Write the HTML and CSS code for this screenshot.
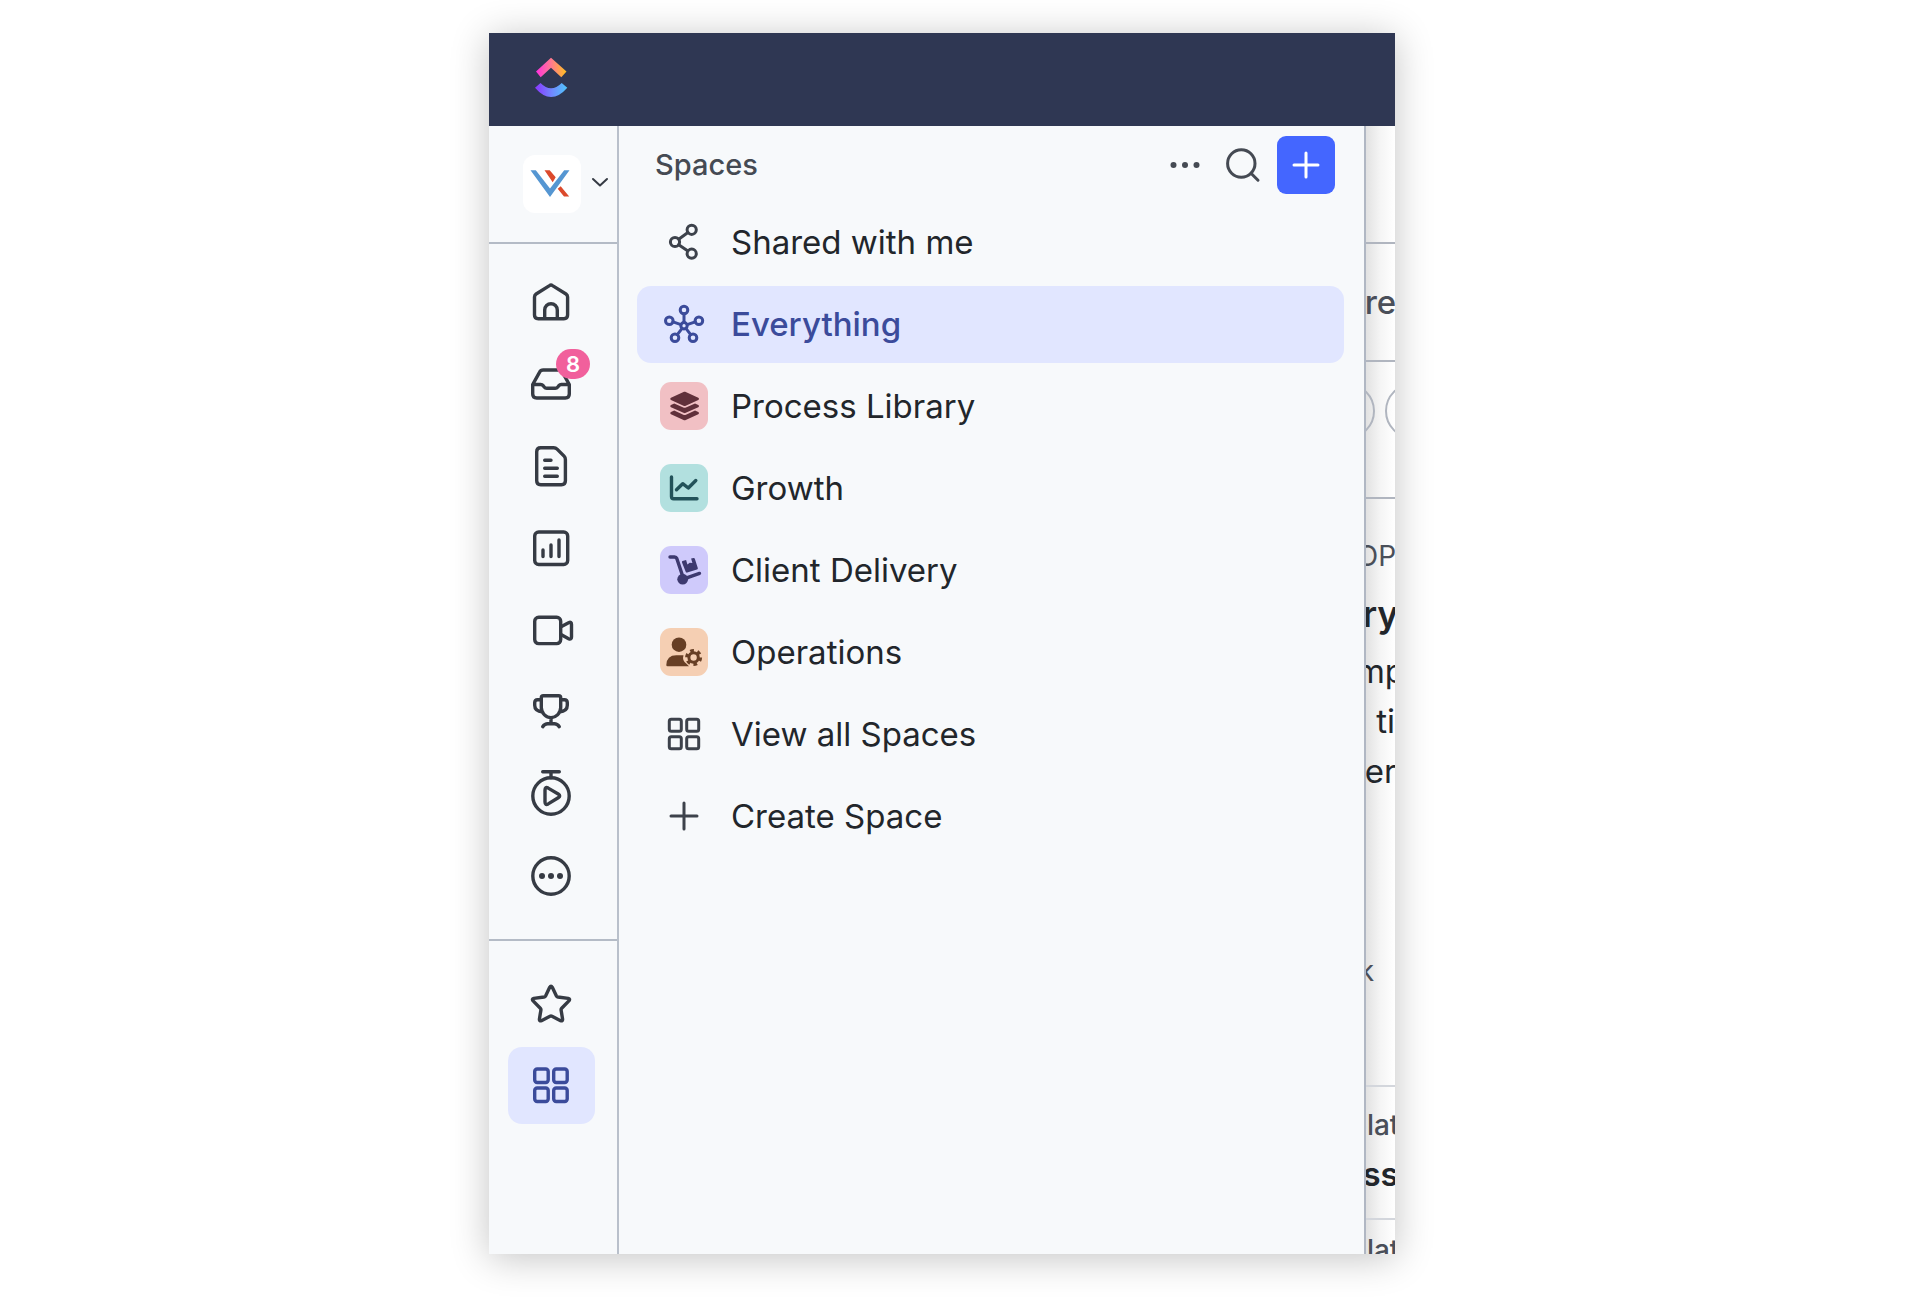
FILE: index.html
```html
<!DOCTYPE html>
<html lang="en">
<head>
<meta charset="utf-8">
<meta name="viewport" content="width=device-width, initial-scale=1">
<title>Spaces</title>
<link rel="stylesheet" href="styles.css">
</head>
<body>
<div class="app">
  <header class="topbar">
    <a class="brand" href="#" aria-label="Home page">
      <svg width="36" height="42" viewBox="0 0 36 42">
        <defs>
          <linearGradient id="warm" x1="0" y1="0" x2="1" y2="0"><stop offset="0" stop-color="#ff2fe0"/><stop offset=".5" stop-color="#ff7a8e"/><stop offset="1" stop-color="#ffc01f"/></linearGradient>
          <linearGradient id="cool" x1="0" y1="0" x2="1" y2="0"><stop offset="0" stop-color="#8a35ff"/><stop offset=".55" stop-color="#6f8cff"/><stop offset="1" stop-color="#4fc6fb"/></linearGradient>
        </defs>
        <path fill="url(#warm)" d="M3 15.500 18 1.700l15.500 13.800-5.200 5.700L18 11.700 7.700 21.200z"/>
        <path fill="url(#cool)" d="M2 31.700 7.500 27Q18 37.700 28.700 27l5.600 4.700Q18 50.300 2 31.700z"/>
      </svg>
    </a>
  </header>

  <nav class="rail" aria-label="Main">
    <button class="workspace" type="button" aria-label="Switch workspace">
      <span class="workspace-logo">
        <svg width="58" height="58" viewBox="0 0 58 58">
          <path fill="#dc4a2c" d="M21.500 15.300h5.200l6 7-3 5zM37.700 31.300l8.500 10.200H41l-6.300-7.800z"/>
          <path fill="#5596d2" d="M7.500 15.300h5.300L27 33.500l14.200-18.200h5.300L27 42z"/>
        </svg>
      </span>
      <svg class="line" width="22" height="22" viewBox="0 0 22 22"><path d="M4 6l7 6.500L18 6"/></svg>
    </button>

    <div class="rail-group rail-main">
      <button class="rail-item" type="button" aria-label="Home"><svg class="line" viewBox="0 0 48 48"><path d="M22.500 7.600q1.500-1 3 0L39 16q1.600 1.100 1.600 3V37q0 3.700-3.700 3.700H11.200q-3.700 0-3.700-3.700V19q0-1.900 1.600-3zM17.700 40.500V32a6.300 6.300 0 0 1 12.600 0v8.500"/></svg></button>
      <button class="rail-item" type="button" aria-label="Inbox, 8 new"><svg class="line" viewBox="0 0 48 48"><path d="M5.700 24.500 12.500 12.300Q13.700 10 16.200 10h15.600q2.500 0 3.700 2.300l6.800 12.200V34q0 4-4 4H9.700q-4 0-4-4zh8q1.500 0 2.500 1.200l1 1.300q1 1.300 2.500 1.300h8.600q1.500 0 2.500-1.300l1-1.300q1-1.200 2.500-1.200h8"/></svg><span class="badge">8</span></button>
      <button class="rail-item" type="button" aria-label="Docs"><svg class="line" viewBox="0 0 48 48"><path d="M13.700 5.700h13q2 0 3.400 1.400l7 7q1.300 1.300 1.300 3.300v21.300q0 4-4 4H13.700q-4 0-4-4v-29q0-4 4-4zM17.700 18.300H24M17.700 26.300h12.600M17.700 34.300h12.600"/></svg></button>
      <button class="rail-item" type="button" aria-label="Dashboards"><svg class="line" viewBox="0 0 48 48"><rect x="7.700" y="8" width="33" height="32.500" rx="4"/><path d="M16 26v6.500M24 21v11.500M32 16v16.500"/></svg></button>
      <button class="rail-item" type="button" aria-label="Clips"><svg class="line" viewBox="0 0 48 48"><rect x="7.700" y="11.300" width="26" height="26.300" rx="4"/><path d="M34 20.700l7.600-4q2.900-1.300 2.900 1.800v12.400q0 3.100-2.900 1.800L34 28.500"/></svg></button>
      <button class="rail-item" type="button" aria-label="Goals"><svg class="line" viewBox="0 0 48 48"><path d="M16.300 7.700h15.400q2 0 2 2V19.500C33.700 25.500 28.500 29.700 24 29.700S14.300 25.500 14.300 19.500V9.700q0-2 2-2zM14.300 11.700h-3.600q-3 0-3 3v2.600q0 6 8 6.700M33.700 11.700h3.600q3 0 3 3v2.600q0 6-8 6.700M24 29.700v6M15.700 38.700q2-3 5-3h6.600q3 0 5 3"/></svg></button>
      <button class="rail-item" type="button" aria-label="Timesheets"><svg class="line" viewBox="0 0 48 48"><circle cx="24" cy="26" r="18.200"/><path d="M15.700 1.700h16.600M24 1.700v6M18 20q0-3.600 3.200-1.900l10 5.900q3 1.900 0 3.800l-10 6.100Q18 35.600 18 32z"/></svg></button>
      <button class="rail-item" type="button" aria-label="More"><svg class="line" viewBox="0 0 48 48"><circle cx="24" cy="24" r="18.200"/><g class="dots"><circle cx="15" cy="24" r="3"/><circle cx="24" cy="24" r="3"/><circle cx="33" cy="24" r="3"/></g></svg></button>
    </div>

    <div class="rail-group rail-pinned">
      <button class="rail-item" type="button" aria-label="Favorites"><svg class="line" viewBox="0 0 48 48"><path d="M22.700 8.300q1.300-2.300 2.600 0l4 8.500q.5 1 1.600 1.200l10.300 1.400q2.300.6.700 2.500l-7.200 7.300q-.8.800-.6 1.900l1.500 9.100q.1 2.300-2 1.500l-8.600-4.400q-1-.5-2 0l-8.600 4.400q-2.100.8-2-1.500l1.500-9.100q.2-1.100-.6-1.900L6.100 21.900q-1.600-1.900.7-2.500L17.100 18q1.100-.2 1.600-1.200z"/></svg></button>
      <button class="rail-item is-active" type="button" aria-label="Spaces" aria-current="page"><svg class="line" viewBox="0 0 48 48"><rect x="7.700" y="8" width="13.500" height="13.500" rx="2.500"/><rect x="26.700" y="8" width="13.500" height="13.500" rx="2.500"/><rect x="7.700" y="27" width="13.500" height="13.500" rx="2.500"/><rect x="26.700" y="27" width="13.500" height="13.500" rx="2.500"/></svg></button>
    </div>
  </nav>

  <aside class="panel">
    <div class="panel-head">
      <h1 class="panel-title">Spaces</h1>
      <button class="tool" type="button" aria-label="Space options"><svg viewBox="0 0 48 48"><g class="dots"><circle cx="12.500" cy="24" r="3"/><circle cx="24" cy="24" r="3"/><circle cx="35.500" cy="24" r="3"/></g></svg></button>
      <button class="tool" type="button" aria-label="Search"><svg class="line thin" viewBox="0 0 48 48"><circle cx="22.300" cy="22.500" r="13.700"/><path d="M32 32.200l7 7"/></svg></button>
      <button class="add" type="button" aria-label="New"><svg class="line thin" viewBox="0 0 48 48"><path d="M24 12v24M12 24h24"/></svg></button>
    </div>
    <ul class="spaces">
      <li><a class="space" href="#"><span class="icon"><svg class="line thin" viewBox="0 0 48 48"><circle cx="31.700" cy="11.800" r="4.600"/><circle cx="15" cy="24" r="4.600"/><circle cx="31.700" cy="35.700" r="4.600"/><path d="M18.700 21.200l9.200-6.700M18.700 26.700l9.200 6.300"/></svg></span>Shared with me</a></li>
      <li><a class="space is-active" href="#" aria-current="page"><span class="icon"><svg class="line thin" viewBox="0 0 48 48"><circle cx="24" cy="25.700" r="3.200"/><circle cx="24" cy="10" r="3.800"/><circle cx="9.300" cy="20.700" r="3.800"/><circle cx="38.900" cy="20.700" r="3.800"/><circle cx="15" cy="37.700" r="3.800"/><circle cx="33" cy="37.700" r="3.800"/><path d="M24 13.800v8.700M13 21.900l8 2.700M35.200 21.900l-8 2.700M22.100 28.400l-4.800 6.200M25.900 28.400l4.800 6.200"/></svg></span>Everything</a></li>
      <li><a class="space" href="#"><span class="icon tile rose"><svg viewBox="0 0 48 48"><path transform="translate(10.300 9.700) scale(.056)" d="M12.410 148.020l232.940 105.670c6.800 3.090 14.490 3.090 21.290 0l232.940-105.670c16.550-7.510 16.550-32.520 0-40.030L266.650 2.310a25.607 25.607 0 0 0-21.290 0L12.410 107.980c-16.550 7.510-16.550 32.530 0 40.040zm487.180 88.280l-58.090-26.330-161.640 73.270c-7.560 3.430-15.590 5.170-23.860 5.170s-16.290-1.740-23.860-5.170L70.510 209.970l-58.100 26.330c-16.550 7.500-16.550 32.500 0 40l232.940 105.590c6.800 3.080 14.490 3.080 21.290 0L499.590 276.300c16.550-7.500 16.550-32.500 0-40zm0 127.800l-57.870-26.230-161.860 73.370c-7.560 3.430-15.590 5.170-23.860 5.170s-16.290-1.740-23.860-5.170L70.290 337.870 12.410 364.100c-16.550 7.500-16.550 32.500 0 40l232.940 105.590c6.800 3.080 14.490 3.080 21.290 0L499.590 404.100c16.550-7.500 16.550-32.500 0-40z"/></svg></span>Process Library</a></li>
      <li><a class="space" href="#"><span class="icon tile teal"><svg class="line" viewBox="0 0 48 48"><path d="M11.500 13v19.500q0 2.200 2.200 2.200H37M16.500 25.800l6.200-6.100 5.600 4.300 7.500-7.500"/></svg></span>Growth</a></li>
      <li><a class="space" href="#"><span class="icon tile violet"><svg viewBox="0 0 48 48"><path d="M22.500 15l3.600-1 1.300 4.500 2.300-1.700 2.700.3-1.300-4.500 2.400-.6q1.100-.2 1.400.9L37.800 22q.3 1.200-.8 1.500l-9.800 3q-1.200.3-1.500-.8l-3.700-9.200q-.3-1.200.5-1.500z"/><circle cx="22.700" cy="33.200" r="5.400"/><path class="stroke" d="M10 11h4.600q1.600 0 2.200 1.500l5.500 16.500M26 32.200l13.500-4.800"/></svg></span>Client Delivery</a></li>
      <li><a class="space" href="#"><span class="icon tile peach"><svg viewBox="0 0 48 48"><circle cx="19" cy="16.700" r="7.300"/><path d="M6.300 37q.4-9.700 10-9.700h7.200q-1.700 5.400 3 8.500l2.500 2.500H7.500q-1.200 0-1.200-1.300z"/><path class="stroke" stroke-dasharray="3.400 3.400" d="M40.100 29.500a6.500 6.500 0 1 1-1.900-4.600 6.500 6.500 0 0 1 1.900 4.600"/><circle class="ring" cx="33.600" cy="29.500" r="4.700"/></svg></span>Operations</a></li>
      <li><a class="space" href="#"><span class="icon"><svg class="line thin" viewBox="0 0 48 48"><rect x="9.300" y="9.300" width="12" height="12" rx="2"/><rect x="26.700" y="9.300" width="12" height="12" rx="2"/><rect x="9.300" y="26.700" width="12" height="12" rx="2"/><rect x="26.700" y="26.700" width="12" height="12" rx="2"/></svg></span>View all Spaces</a></li>
      <li><a class="space" href="#"><span class="icon"><svg class="line thin" viewBox="0 0 48 48"><path d="M24 11v26M11 24h26"/></svg></span>Create Space</a></li>
    </ul>
  </aside>

  <main class="content">
    <section class="strip"></section>
    <section class="strip"><p class="lead muted">re</p></section>
    <section class="strip filters"><span class="pill"></span><span class="pill"></span></section>
    <section class="summary">
      <p class="label muted">OP</p>
      <h2 class="heading">ry</h2>
      <p class="text">mp</p>
      <p class="text end">ti</p>
      <p class="text">er</p>
      <p class="label muted note">k</p>
    </section>
    <section class="entry"><p class="label strong muted">plat</p><h3 class="entry-title">ss</h3></section>
    <section class="entry cut"><p class="label strong muted">plat</p></section>
  </main>
</div>
</body>
</html>
```
FILE: styles.css
```css
* { box-sizing: border-box; }

body {
  margin: 0;
  min-height: 100vh;
  padding: 33px 0 46px;
  display: grid;
  grid-template-columns: 489fr 906fr 533fr;
  background: #fff;
  color: #22262b;
  font-family: Inter, "Liberation Sans", sans-serif;
}

button { border: 0; padding: 0; background: none; color: inherit; font: inherit; }
h1, h2, h3, p, ul { margin: 0; padding: 0; }
ul { list-style: none; }
svg { display: block; fill: currentColor; }

.line, .stroke, .ring {
  fill: none;
  stroke: currentColor;
  stroke-width: 3.4;
  stroke-linecap: round;
  stroke-linejoin: round;
}
.thin { stroke-width: 3; }
.dots { fill: currentColor; stroke: none; }

.app {
  grid-column: 2;
  display: grid;
  grid-template: 93px 1fr / 130px 1fr 29px;
  background: #f7f9fb;
  box-shadow: 0 4px 36px rgba(0, 0, 0, .24);
}

.topbar {
  grid-column: 1 / -1;
  display: flex;
  align-items: center;
  padding: 0 44px 5px;
  background: #2f3753;
}

/* Icon rail */
.rail { border-right: 2px solid #b9c0cb; color: #363b44; }
.workspace {
  display: flex;
  align-items: center;
  gap: 8px;
  width: 100%;
  height: 118px;
  padding-left: 34px;
  border-bottom: 2px solid #b4bbc6;
}
.workspace-logo { border-radius: 12px; background: #fff; }
.workspace .line { stroke-width: 2; }
.rail-group {
  display: flex;
  flex-direction: column;
  gap: 5px;
  padding: 24px 22px 24px 19px;
}
.rail-main { padding-top: 20px; border-bottom: 2px solid #b4bbc6; }
.rail-item {
  position: relative;
  display: flex;
  align-items: center;
  justify-content: center;
  height: 77px;
  padding: 0 1px 2px 0;
  border-radius: 14px;
}
.rail-item svg { width: 48px; height: 48px; }
.is-active { background: #e1e6ff; color: #3b4b9b; }
.badge {
  position: absolute;
  left: 48px;
  top: 3px;
  width: 34px;
  height: 30px;
  border-radius: 15px;
  background: #f1609c;
  color: #fff;
  font-size: 22px;
  font-weight: 600;
  line-height: 30px;
  text-align: center;
}

/* Spaces panel */
.panel { border-right: 2px solid #b0b7c3; }
.panel-head {
  display: flex;
  align-items: center;
  gap: 10px;
  padding: 10px 29px 10px 36px;
  color: #454a53;
}
.panel-title { flex: 1; font-size: 29px; font-weight: 500; line-height: 40px; }
.tool svg, .add svg { width: 48px; height: 48px; }
.add {
  display: grid;
  place-items: center;
  width: 58px;
  height: 58px;
  border-radius: 9px;
  background: #4466ff;
  color: #fff;
}
.spaces { display: grid; gap: 5px; padding: 0 20px 20px 18px; }
.space {
  display: flex;
  align-items: center;
  gap: 23px;
  height: 77px;
  padding: 0 23px 2px;
  border-radius: 14px;
  color: inherit;
  font-size: 33px;
  line-height: 42px;
  text-decoration: none;
}
.space.is-active { color: #3b4b9b; font-weight: 500; }
.icon { flex: none; width: 48px; height: 48px; color: #3d424b; }
.is-active .icon { color: inherit; }
.tile { border-radius: 11px; }
.rose { background: #f1c0c4; color: #60303a; }
.teal { background: #b2e0df; color: #23525a; }
.violet { background: #cfcafb; color: #3d396f; }
.peach { background: #f5cfb3; color: #673f25; }
.peach .stroke { stroke-width: 4; stroke-linecap: butt; }
.peach .ring { stroke-width: 3; }

/* Page behind the panel */
.content {
  display: flex;
  flex-direction: column;
  overflow: hidden;
  background: linear-gradient(90deg, #e2e2e2, #f5f5f5 50%, #fff);
  white-space: nowrap;
}
.strip {
  display: flex;
  align-items: center;
  justify-content: center;
  height: 118px;
  border-bottom: 2px solid #b0b5bf;
}
.filters { gap: 10px; height: 137px; padding: 0 2px 38px 0; }
.pill { flex: none; width: 80px; height: 56px; border: 2px solid #b0b5bf; border-radius: 28px; }
.summary, .entry {
  display: flex;
  flex-direction: column;
  align-items: center;
  border-bottom: 2px solid #d3d6dc;
}
.summary { height: 588px; padding-top: 35px; }
.muted { color: #4a4f59; }
.lead { font-size: 33px; font-weight: 500; line-height: 50px; }
.label { padding-right: 8px; font-size: 28px; line-height: 44px; }
.strong { padding-right: 12px; font-weight: 500; }
.heading { margin-top: 4px; font-size: 36px; font-weight: 600; line-height: 64px; }
.text { font-size: 33px; line-height: 50px; }
.end { align-self: flex-end; }
.note { margin-top: 153px; padding-right: 28px; }
.entry { height: 133px; padding-top: 16px; }
.entry-title { font-size: 33px; font-weight: 600; line-height: 54px; }
.cut { height: 34px; padding-top: 8px; border-bottom: 0; overflow: hidden; }
```
